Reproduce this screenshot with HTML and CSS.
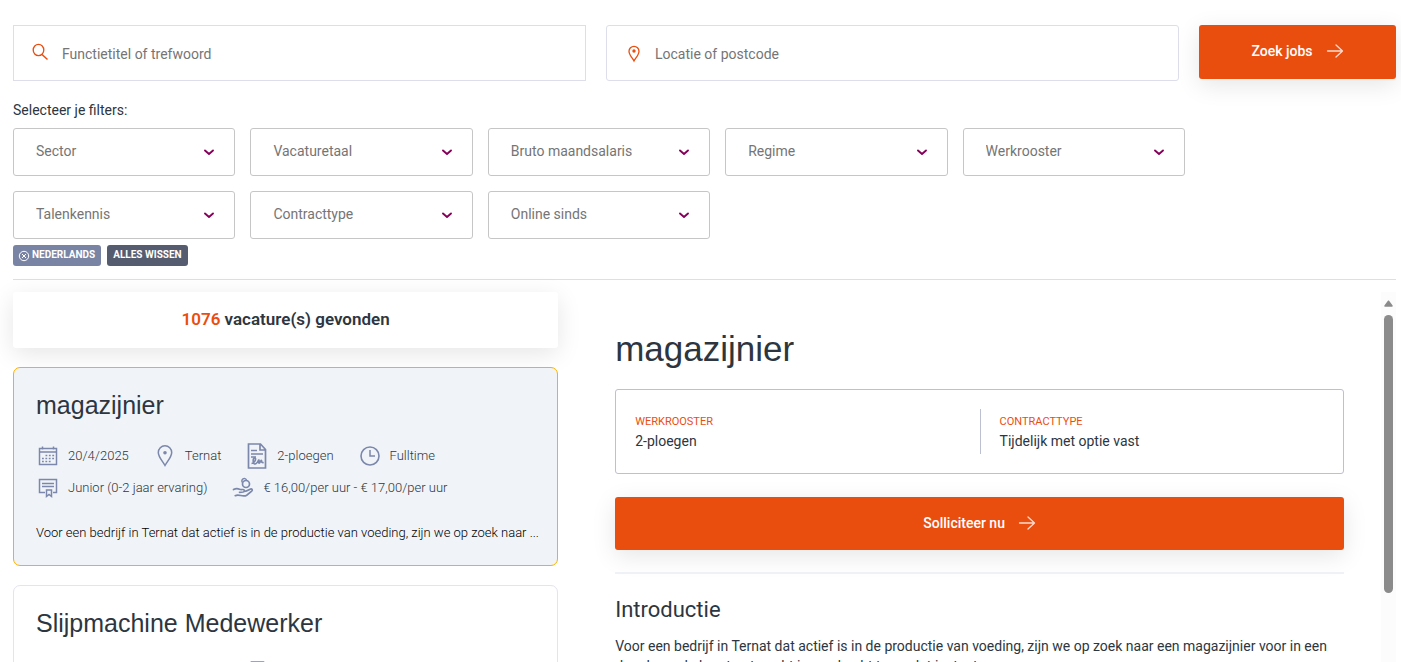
FILE: index.html
```
<!DOCTYPE html>
<html lang="nl">
<head>
    <meta charset="UTF-8">
    <meta name="viewport" content="width=device-width, initial-scale=1.0">
    <title>Vacatures</title>
    <link rel="stylesheet" href="styles.css">
</head>
<body>
    <svg class="sprite" aria-hidden="true">
        <symbol id="chevron" viewBox="0 0 12 12">
            <path d="M2 4.500l4 3.500 4-3.500" fill="none" stroke="#86005a" stroke-width="1.900" stroke-linecap="round" stroke-linejoin="round"/>
        </symbol>
        <symbol id="arrow" viewBox="0 0 18 18">
            <path d="M1.500 9h15M10 3l6.500 6-6.500 6" fill="none" stroke="currentColor" stroke-width="1.300" stroke-linecap="round" stroke-linejoin="round"/>
        </symbol>
        <symbol id="calendar" viewBox="0 0 24 24">
            <path d="M3.500 4.500h17v16h-17zM3.500 8h17M6.500 2.500v3M17.500 2.500v3" fill="none" stroke="currentColor" stroke-width="1.500"/>
            <path d="M9.500 11.500h9M6 14.500h12.500M6 17.500h9" fill="none" stroke="currentColor" stroke-width="1.600" stroke-dasharray="1.800 1.600"/>
        </symbol>
        <symbol id="pin" viewBox="0 0 24 24">
            <path d="M12 21.500c-2.500-4.500-6.700-8.500-6.700-13a6.700 6.700 0 0 1 13.400 0c0 4.500-4.200 8.500-6.700 13z" fill="none" stroke="currentColor" stroke-width="1.500"/>
            <circle cx="12" cy="8.800" r="1.800" fill="currentColor"/>
        </symbol>
        <symbol id="contract" viewBox="0 0 24 26">
            <path d="M3.500 1h12l5 5.500v18.500h-17zM15 1v6h5.500" fill="none" stroke="currentColor" stroke-width="1.700"/>
            <path d="M6 7.500h6M6 11h12M6 14h5" fill="none" stroke="currentColor" stroke-width="1.500"/>
            <path d="M6.500 20.500c2 0 4.500-3 4-5s-2.700 0-2.300 3 2 3 3.500 1.500 1.800-3.500 2.300-3-.8 3.200.2 3.200 1.500-3.200 2.200-2.700-.5 2.500 2.300 2" fill="none" stroke="currentColor" stroke-width="1.600"/>
        </symbol>
        <symbol id="clock" viewBox="0 0 24 24">
            <circle cx="12" cy="12" r="9" fill="none" stroke="currentColor" stroke-width="1.600"/>
            <path d="M12 6v6h5" fill="none" stroke="currentColor" stroke-width="1.500"/>
        </symbol>
        <symbol id="diploma" viewBox="0 0 24 24">
            <path d="M9 16.500h-5.500v-13h17v13h-3.500M6 7.500h12M6 10.500h12" fill="none" stroke="currentColor" stroke-width="1.500"/>
            <path d="M10.500 14h5v6.500l-2.500-2-2.500 2z" fill="none" stroke="currentColor" stroke-width="1.500"/>
        </symbol>
        <symbol id="salary" viewBox="0 0 24 24">
            <circle cx="15" cy="8" r="3.500" fill="none" stroke="currentColor" stroke-width="1.700"/>
            <path d="M11.500 6.500a2.400 2.400 0 1 1 4-2.500" fill="none" stroke="currentColor" stroke-width="1.500"/>
            <path d="M2.500 13.500c2-1 4-1.200 6-.3 1 .5 2 .3 3.500.3 1.700 0 2 2.300.2 2.500l-3.700.3M13.500 15.500c2.500-.3 4-1.500 5.500-2.300 1.800-1 3 .8 1.700 2l-5 4c-2 1.300-4 .8-6 .3s-3.700-.8-5.500.2" fill="none" stroke="currentColor" stroke-width="1.700" stroke-linecap="round"/>
        </symbol>
    </svg>

    <div class="page">
        <form class="search">
            <label class="search-field square">
                <svg class="search-icon" viewBox="0 0 20 20" aria-hidden="true">
                    <ellipse cx="7.500" cy="7" rx="5.300" ry="5.700" fill="none" stroke="currentColor" stroke-width="1.300"/>
                    <path d="M11 11.500l5.500 5" fill="none" stroke="currentColor" stroke-width="1.500"/>
                </svg>
                <input type="text" placeholder="Functietitel of trefwoord" aria-label="Functietitel of trefwoord">
            </label>
            <label class="search-field location">
                <svg class="search-icon" viewBox="0 0 20 20" aria-hidden="true">
                    <path d="M10 18c-1.700-3.200-5-6-5-9.700a5 5 0 0 1 10 0c0 3.700-3.300 6.500-5 9.700z" fill="none" stroke="currentColor" stroke-width="1.300"/>
                    <circle cx="10" cy="8" r="1.700" fill="currentColor"/>
                </svg>
                <input type="text" placeholder="Locatie of postcode" aria-label="Locatie of postcode">
            </label>
            <button type="submit" class="btn btn-search">Zoek jobs <svg class="arrow"><use href="#arrow"/></svg></button>
        </form>

        <p class="filter-title">Selecteer je filters:</p>
        <div class="filters">
            <label class="filter"><select aria-label="Sector"><option>Sector</option></select><svg class="chevron"><use href="#chevron"/></svg></label>
            <label class="filter"><select aria-label="Vacaturetaal"><option>Vacaturetaal</option></select><svg class="chevron"><use href="#chevron"/></svg></label>
            <label class="filter"><select aria-label="Bruto maandsalaris"><option>Bruto maandsalaris</option></select><svg class="chevron"><use href="#chevron"/></svg></label>
            <label class="filter"><select aria-label="Regime"><option>Regime</option></select><svg class="chevron"><use href="#chevron"/></svg></label>
            <label class="filter"><select aria-label="Werkrooster"><option>Werkrooster</option></select><svg class="chevron"><use href="#chevron"/></svg></label>
            <label class="filter"><select aria-label="Talenkennis"><option>Talenkennis</option></select><svg class="chevron"><use href="#chevron"/></svg></label>
            <label class="filter"><select aria-label="Contracttype"><option>Contracttype</option></select><svg class="chevron"><use href="#chevron"/></svg></label>
            <label class="filter"><select aria-label="Online sinds"><option>Online sinds</option></select><svg class="chevron"><use href="#chevron"/></svg></label>
        </div>
        <div class="tags">
            <button type="button" class="tag">
                <svg class="tag-icon" viewBox="0 0 12 12" aria-hidden="true">
                    <circle cx="6" cy="6" r="4.700" fill="none" stroke="currentColor"/>
                    <path d="M4 4l4 4M8 4l-4 4" stroke="currentColor"/>
                </svg>
                Nederlands
            </button>
            <button type="button" class="tag tag-clear">Alles wissen</button>
        </div>

        <main class="results">
            <section class="list">
                <p class="count"><span>1076</span> vacature(s) gevonden</p>
                <article class="card active">
                    <h2>magazijnier</h2>
                    <ul class="meta">
                        <li><svg><use href="#calendar"/></svg>20/4/2025</li>
                        <li><svg><use href="#pin"/></svg>Ternat</li>
                        <li><svg class="tall"><use href="#contract"/></svg>2-ploegen</li>
                        <li><svg><use href="#clock"/></svg>Fulltime</li>
                        <li><svg><use href="#diploma"/></svg>Junior (0-2 jaar ervaring)</li>
                        <li><svg><use href="#salary"/></svg>€ 16,00/per uur - € 17,00/per uur</li>
                    </ul>
                    <p class="intro">Voor een bedrijf in Ternat dat actief is in de productie van voeding, zijn we op zoek naar ...</p>
                </article>
                <article class="card">
                    <h2>Slijpmachine Medewerker</h2>
                    <ul class="meta">
                        <li><svg><use href="#calendar"/></svg>20/4/2025</li>
                        <li><svg><use href="#pin"/></svg>Temse</li>
                        <li><svg class="tall"><use href="#contract"/></svg>2-ploegen</li>
                        <li><svg><use href="#clock"/></svg>Fulltime</li>
                    </ul>
                </article>
            </section>

            <section class="detail">
                <div class="detail-body">
                    <h1>magazijnier</h1>
                    <dl class="facts">
                        <div>
                            <dt>Werkrooster</dt>
                            <dd>2-ploegen</dd>
                        </div>
                        <div>
                            <dt>Contracttype</dt>
                            <dd>Tijdelijk met optie vast</dd>
                        </div>
                    </dl>
                    <button type="button" class="btn btn-apply">Solliciteer nu <svg class="arrow"><use href="#arrow"/></svg></button>
                    <hr>
                    <h3>Introductie</h3>
                    <p>Voor een bedrijf in Ternat dat actief is in de productie van voeding, zijn we op zoek naar een magazijnier voor in een dagploeg. Je komt er terecht in een hecht team dat instaat.</p>
                </div>
                <div class="scrollbar" aria-hidden="true">
                    <svg class="scroll-up" viewBox="0 0 9 7"><path d="M4.500 1.200L8 6H1z" fill="#8b8b8b" stroke="#8b8b8b" stroke-width="1.500" stroke-linejoin="round"/></svg>
                    <div class="thumb"></div>
                </div>
            </section>
        </main>
    </div>
</body>
</html>
```

FILE: styles.css
```
* {
    box-sizing: border-box;
}
body {
    margin: 0;
    font-family: Roboto, Arial, sans-serif;
    font-size: 14px;
    line-height: 20px;
    color: #2d3640;
    background-color: #fff;
}
h1, h2, h3, p, ul, dl, dd {
    margin: 0;
    padding: 0;
}
h1, h2, h3 {
    font-weight: 400;
}
input, select, button {
    font-family: inherit;
    font-size: 14px;
}
.sprite {
    display: none;
}
.page {
    display: flex;
    flex-direction: column;
    height: 100vh;
    padding: 25px 5px 0 13px;
    overflow: hidden;
}

/* search bar */
.search {
    display: grid;
    grid-template-columns: 1fr 1fr 197px;
    gap: 20px;
    align-items: start;
}
.search-field {
    display: flex;
    align-items: center;
    height: 56px;
    padding: 0 17px;
    border: 1px solid #dcdfe9;
    border-radius: 3px;
    color: #e94e0f;
}
.search-field.square {
    border-radius: 0;
}
.search-icon {
    width: 20px;
    height: 20px;
    flex: none;
}
.search-field input {
    flex: 1;
    min-width: 0;
    height: 54px;
    padding: 2px 0 0 11px;
    border: none;
    outline: none;
    background: none;
}
.search-field input::placeholder {
    color: #757575;
}
.btn {
    display: flex;
    align-items: center;
    justify-content: center;
    gap: 13px;
    height: 54px;
    padding: 0 0 2px;
    border: none;
    border-radius: 3px;
    background-color: #ea4e0f;
    color: #fff;
    font-weight: 500;
    box-shadow: 0 6px 24px rgba(0, 0, 0, 0.1);
    cursor: pointer;
}
.arrow {
    width: 18px;
    height: 18px;
    opacity: 0.8;
}

/* filters */
.filter-title {
    margin: 19px 0 8px;
}
.filters {
    display: grid;
    grid-template-columns: repeat(5, 1fr);
    gap: 15px;
    margin-right: 211px;
}
.filter {
    display: grid;
    align-items: center;
}
.filter select, .filter .chevron {
    grid-area: 1 / 1;
}
.filter select {
    appearance: none;
    width: 100%;
    height: 48px;
    padding: 0 40px 2px 22px;
    border: 1px solid #c6c6c6;
    border-radius: 3px;
    background-color: #fff;
    color: #757575;
}
.filter .chevron {
    width: 12px;
    height: 12px;
    margin-right: 20px;
    justify-self: end;
    pointer-events: none;
}
.tags {
    display: flex;
    gap: 6px;
    padding: 6px 0 13px;
    border-bottom: 1px solid #dfdfdf;
}
.tag {
    display: flex;
    align-items: center;
    gap: 2px;
    height: 21px;
    padding: 0 6px 2px 5px;
    border: none;
    border-radius: 3px;
    background-color: #7983a3;
    color: #fff;
    font-size: 10px;
    font-weight: 700;
    text-transform: uppercase;
}
.tag-clear {
    padding: 0 6px 2px;
    background-color: #555c70;
}
.tag-icon {
    width: 12px;
    height: 12px;
    margin-top: 2px;
}

/* results */
.results {
    display: grid;
    grid-template-columns: 4fr 6fr;
    gap: 20px;
    flex: 1;
    min-height: 0;
    padding-top: 12px;
}
.list {
    display: flex;
    flex-direction: column;
    gap: 19px;
    min-width: 0;
}
.count {
    padding: 17px 0 19px;
    border-radius: 3px;
    background-color: #fff;
    font-size: 17px;
    font-weight: 600;
    text-align: center;
    box-shadow: 0 6px 24px rgba(0, 0, 0, 0.1);
}
.count span {
    color: #ea4e0f;
}
.card {
    padding: 22px;
    border: 1px solid #e3e4ee;
    border-radius: 7px;
    background-color: #fff;
}
.card.active {
    border-color: #f9b000;
    background-color: #f0f4f9;
}
.card h2 {
    font-family: "Liberation Sans", Arial, sans-serif;
    font-size: 25px;
    line-height: 30px;
}
.meta {
    display: flex;
    flex-wrap: wrap;
    column-gap: 24px;
    margin: 20px 0 19px;
    font-size: 13px;
    font-weight: 300;
    list-style: none;
}
.meta li {
    display: flex;
    align-items: center;
    gap: 8px;
    height: 32px;
}
.meta svg {
    width: 24px;
    height: 24px;
    color: #7b87ab;
}
.meta svg.tall {
    height: 26px;
}
.intro {
    font-size: 13px;
    font-weight: 300;
    color: #000;
    white-space: nowrap;
}

/* job detail */
.detail {
    display: flex;
    min-width: 0;
    min-height: 0;
}
.detail-body {
    flex: 1;
    padding: 35px 37px 0;
}
.detail h1 {
    margin-bottom: 18px;
    font-family: "Liberation Sans", Arial, sans-serif;
    font-size: 35px;
    line-height: 44px;
}
.facts {
    display: grid;
    grid-template-columns: 1fr 1fr;
    padding: 19px;
    border: 1px solid #bcc0d0;
    border-radius: 3px;
}
.facts > div {
    padding: 3px 0;
}
.facts > div + div {
    padding-left: 19px;
    border-left: 1px solid #bcc0d0;
}
.facts dt {
    color: #ea4e0f;
    font-size: 11px;
    line-height: 19px;
    text-transform: uppercase;
}
.btn-apply {
    width: 100%;
    height: 53px;
    margin-top: 23px;
}
.detail hr {
    height: 2px;
    margin: 22px 0 23px;
    border: none;
    background-color: #eef2f7;
}
.detail h3 {
    margin-bottom: 13px;
    font-size: 22px;
    line-height: 26px;
}
.scrollbar {
    display: flex;
    flex-direction: column;
    align-items: center;
    gap: 8px;
    width: 15px;
    padding-top: 8px;
    background-color: #fcfcfc;
}
.scroll-up {
    width: 9px;
    height: 7px;
}
.thumb {
    width: 9px;
    height: 278px;
    border-radius: 5px;
    background-color: #8b8b8b;
}
```
